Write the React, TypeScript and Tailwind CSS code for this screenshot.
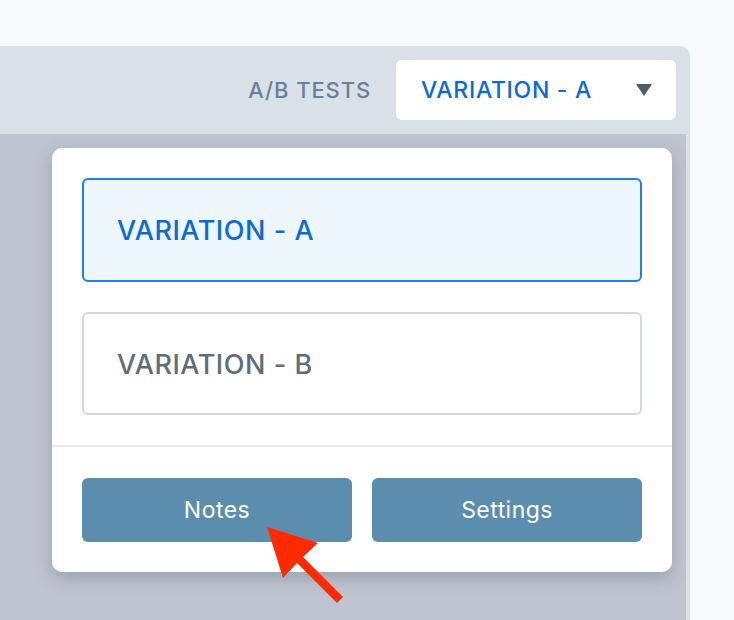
import React from 'react'

const font = { fontFamily: 'Inter, "Noto Sans", sans-serif' }

const Option = ({ label, active }: { label: string; active?: boolean }) => (
  <div
    className={
      active
        ? 'flex h-[104px] items-center rounded-md border-2 border-[#1b80ee] bg-[#eef6fe] px-[33px] pt-[3px] text-[27px] font-medium tracking-[0.02em] text-[#0b69d9]'
        : 'flex h-[103px] items-center rounded-md border-2 border-[#d3d8de] bg-white px-[33px] pt-[3px] text-[27px] font-medium tracking-[0.02em] text-[#5d6d79]'
    }
  >
    {label}
  </div>
)

export default function App() {
  return (
    <div className="relative flex h-[620px] w-[734px] overflow-hidden bg-[#f8f9fb] pt-[46px]" style={font}>
      <div className="flex w-[690px] flex-col overflow-hidden rounded-tr-[10px]">
        <div className="flex h-[88px] shrink-0 items-center justify-end gap-[25px] bg-[#dae0e7] pr-[14px]">
          <span className="text-[22px] font-medium tracking-[0.04em] text-[#6a7f98]">A/B TESTS</span>
          <div className="flex h-[60px] w-[280px] items-center justify-between rounded-md bg-white pl-[25px] pr-[24px]">
            <span className="text-[23px] font-medium tracking-[0.03em] text-[#0b69d9]">VARIATION - A</span>
            <svg width="16" height="12" viewBox="0 0 16 12" aria-hidden="true">
              <path d="M0 0h16L8 12z" fill="#4f5b66" />
            </svg>
          </div>
        </div>
        <div className="flex-1 border-r-4 border-[#dde1e6] bg-[#bfc5d0] pl-[52px] pt-[14px]">
          <div className="flex h-[424px] w-[620px] flex-col rounded-[10px] bg-white shadow-[0_6px_18px_rgba(40,50,70,0.25)]">
            <div className="flex flex-col gap-[30px] px-[30px] pt-[30px]">
              <Option label="VARIATION - A" active />
              <Option label="VARIATION - B" />
            </div>
            <div className="mt-[30px] h-[2px] bg-[#e6eaee]" />
            <div className="mt-[31px] flex gap-[20px] px-[30px]">
              <button className="h-[64px] flex-1 rounded-md bg-[#5b8eae] text-[23px] font-normal tracking-[0.02em] text-white">Notes</button>
              <button className="h-[64px] flex-1 rounded-md bg-[#5b8eae] text-[23px] font-normal tracking-[0.02em] text-white">Settings</button>
            </div>
          </div>
        </div>
      </div>
      <svg className="absolute left-0 top-0" width="734" height="620" aria-hidden="true">
        <polygon points="267,527 318,543 303,557 343,597 337,603 297,563 283,578" fill="#ff2a00" />
      </svg>
    </div>
  )
}
